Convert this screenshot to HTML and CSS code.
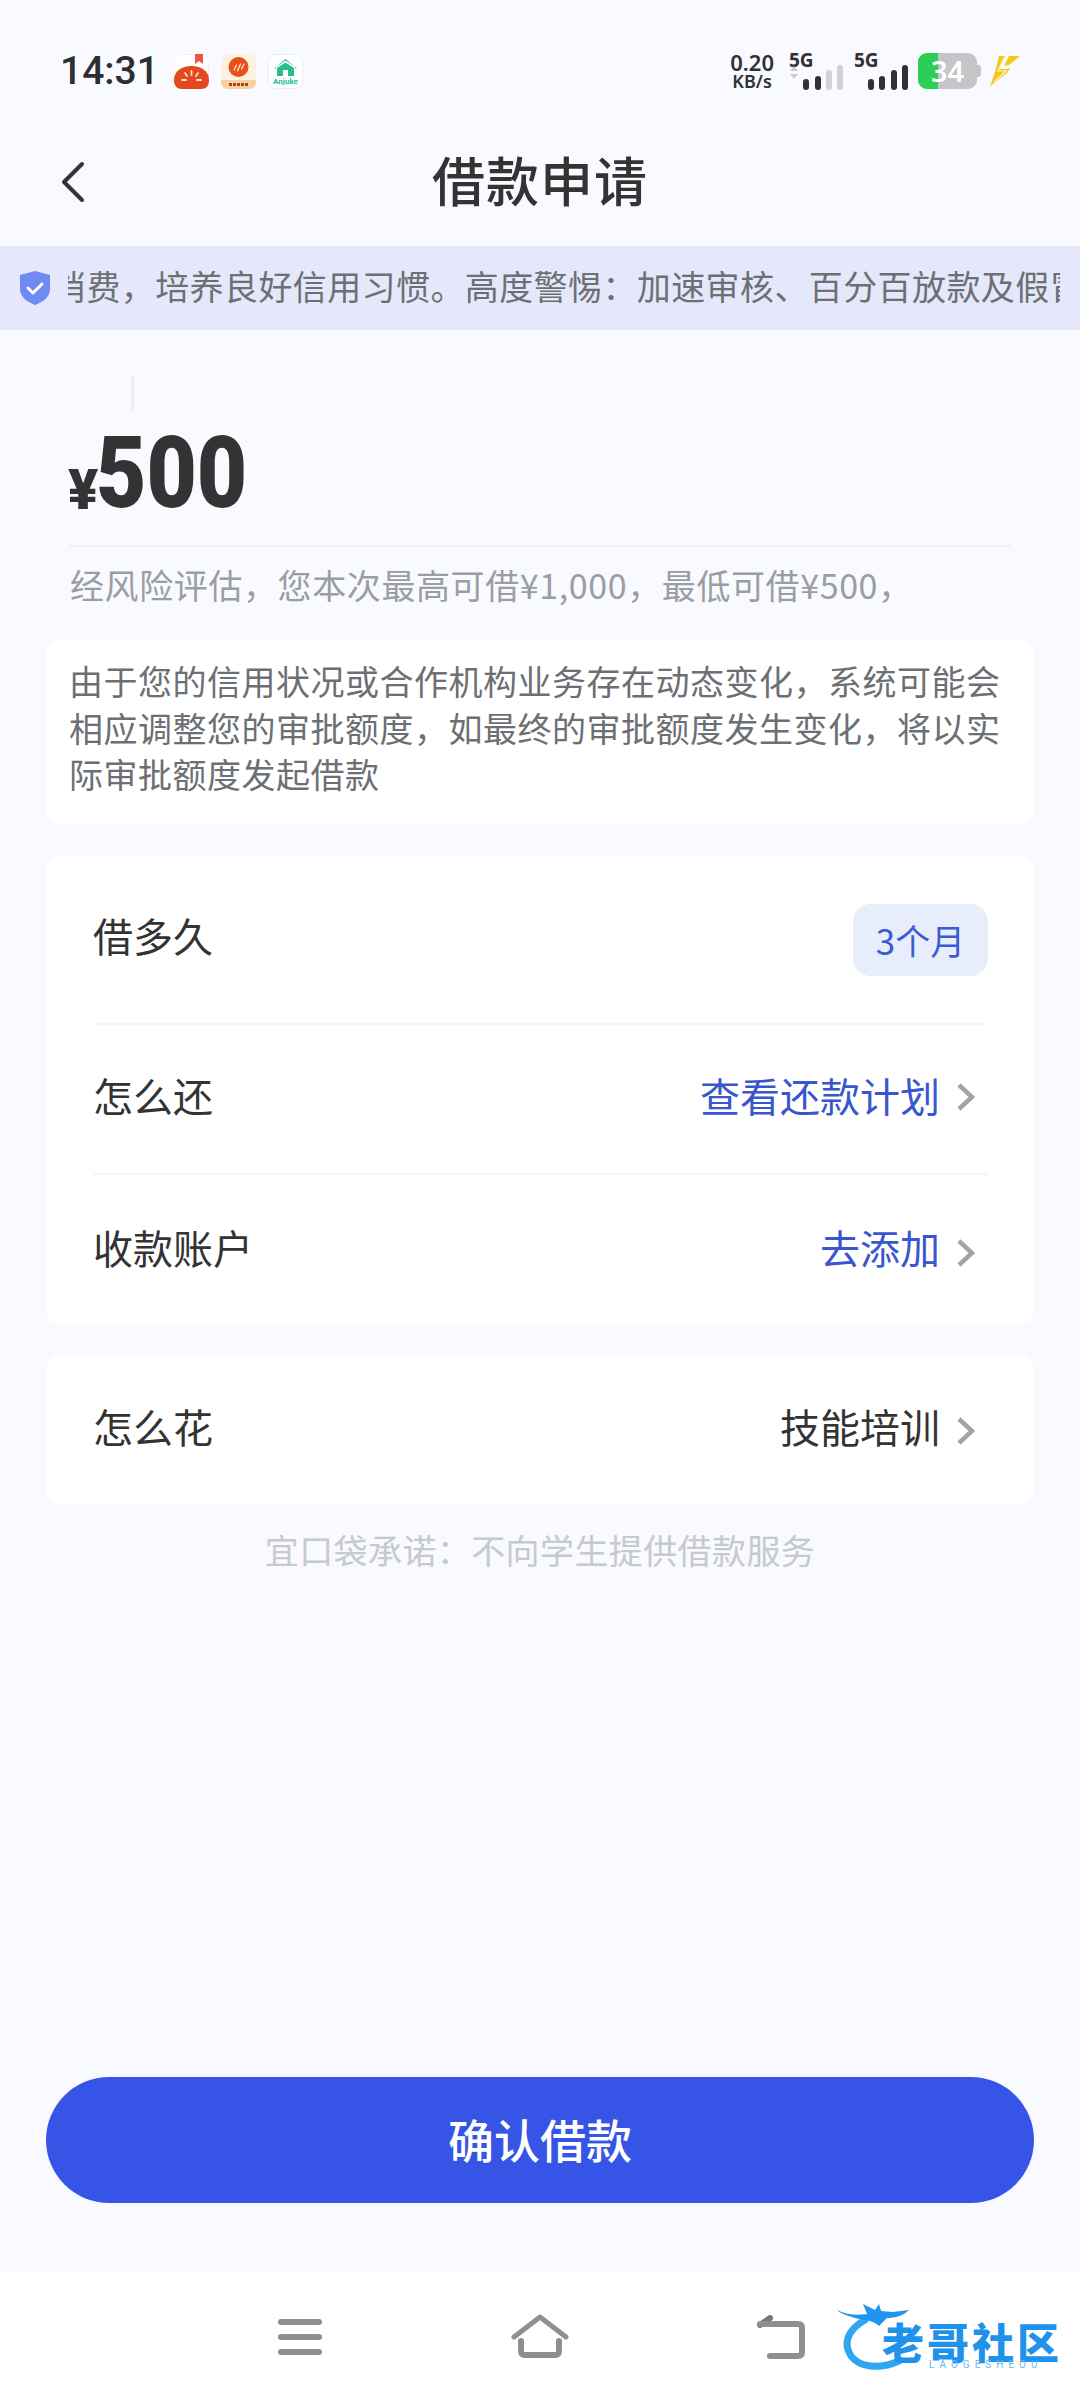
FILE: index.html
```html
<!DOCTYPE html>
<html lang="zh-CN">
<head>
    <meta charset="UTF-8">
    <meta name="viewport" content="width=device-width, initial-scale=1.0">
    <title>借款申请</title>
    <link rel="stylesheet" href="styles.css">
</head>
<body>
    <div class="page">
        <div class="status-bar">
            <span class="clock">14:31</span>
            <div class="app-icons">
                <svg class="app-icon" viewBox="0 0 35 35">
                    <rect x=".5" y=".5" width="34" height="34" rx="7" fill="#fff" stroke="#f0f1f4"/>
                    <path d="M21 0h8v10l-4-3-4 3z" fill="#e9553f"/>
                    <path d="M0 26C0 17 8 12 17.500 12S35 17 35 26c0 6-3 9-8 9H8c-5 0-8-3-8-9z" fill="#e4481c"/>
                    <path d="M17.500 17v4M11 19l2 3M24 19l-2 3M8 26h4M23 26h4" stroke="#ffe0c8" stroke-width="1.800" stroke-linecap="round"/>
                </svg>
                <svg class="app-icon" viewBox="0 0 35 35">
                    <rect width="35" height="35" rx="7" fill="#fdf1e2"/>
                    <path d="M0 26h35v2a7 7 0 0 1-7 7H7a7 7 0 0 1-7-7z" fill="#fbd0a0"/>
                    <circle cx="17.500" cy="13" r="10" fill="#e8501a"/>
                    <path d="M13 16l2.500-5M16.500 17l3-7M20.500 15l2.500-5" stroke="#ffe6cf" stroke-width="1.300" stroke-linecap="round"/>
                    <path d="M8 30.500h19" stroke="#a3451a" stroke-width="3" stroke-dasharray="3 1"/>
                </svg>
                <svg class="app-icon" viewBox="0 0 35 35">
                    <rect x=".5" y=".5" width="34" height="34" rx="7" fill="#fff" stroke="#eceef2"/>
                    <path d="M17.500 5L29 14.500h-2v-1.500L17.500 6.500 8 13v1.500H6z" fill="#28bd91"/>
                    <path d="M17.500 8.500L26 14v8H9v-8z" fill="#28bd91"/>
                    <rect x="15" y="16" width="5" height="6" fill="#fff"/>
                    <text x="17.500" y="30" text-anchor="middle" class="anjuke">Anjuke</text>
                </svg>
            </div>
            <div class="status-right">
                <div class="net-speed">
                    <span class="speed-num">0.20</span>
                    <span class="speed-unit">KB/s</span>
                </div>
                <div class="sim">
                    <span class="sim-label">5G</span>
                    <svg class="sim-bars" viewBox="0 0 54 25">
                        <path d="M5 1l4 5H1zM5 14l4-5H1z" fill="#c9cbcf"/>
                        <rect x="14" y="14" width="6" height="11" rx="3" fill="#2f3133"/>
                        <rect x="26" y="11" width="6" height="14" rx="3" fill="#2f3133"/>
                        <rect x="37" y="5" width="6" height="20" rx="3" fill="#d0d2d5"/>
                        <rect x="48" y="0" width="6" height="25" rx="3" fill="#d0d2d5"/>
                    </svg>
                </div>
                <div class="sim">
                    <span class="sim-label">5G</span>
                    <svg class="sim-bars" viewBox="0 0 54 25">
                        <rect x="14" y="14" width="6" height="11" rx="3" fill="#2f3133"/>
                        <rect x="25" y="11" width="6" height="14" rx="3" fill="#2f3133"/>
                        <rect x="37" y="5" width="6" height="20" rx="3" fill="#2f3133"/>
                        <rect x="48" y="0" width="6" height="25" rx="3" fill="#2f3133"/>
                    </svg>
                </div>
                <div class="battery">
                    <span class="battery-fill"></span>
                    <span class="battery-num">34</span>
                    <span class="battery-nub"></span>
                </div>
                <svg class="bolt" viewBox="0 0 30 30">
                    <path d="M9 0h21L19 9l-5 1 5-10-1 0z" fill="#f6c81e"/>
                    <path d="M9 0h6l-6 13h9l3-2-4 6L0 30 5 16z" fill="#f6c81e"/>
                    <path d="M14 2L8 15h8L4 26" fill="none" stroke="#fdf3c4" stroke-width="1.200"/>
                </svg>
            </div>
        </div>

        <div class="nav-bar">
            <svg class="back-icon" viewBox="0 0 24 42">
                <path d="M21 3L3 21l18 18" fill="none" stroke="#333" stroke-width="4" stroke-linecap="round" stroke-linejoin="round"/>
            </svg>
            <h1 class="nav-title">借款申请</h1>
        </div>

        <div class="notice">
            <svg class="shield" viewBox="0 0 30 34">
                <path d="M15 0l15 4v14c0 8-7 13-15 16C7 31 0 26 0 18V4z" fill="#6f8bf2"/>
                <path d="M8 17l5 5 9-9" fill="none" stroke="#fff" stroke-width="3" stroke-linecap="round" stroke-linejoin="round"/>
            </svg>
            <div class="notice-clip">
                <p class="notice-text">消费&#65292;培养良好信用习惯。高度警惕&#65306;加速审核、百分百放款及假冒</p>
            </div>
        </div>

        <div class="amount-box">
            <div class="cursor"></div>
            <div class="amount"><span class="yen">¥</span><span class="amount-num">500</span></div>
            <p class="limit">经风险评估&#65292;您本次最高可借¥1,000&#65292;最低可借¥500&#65292;</p>
        </div>

        <div class="card tip-card">
            由于您的信用状况或合作机构业务存在动态变化&#65292;系统可能会相应调整您的审批额度&#65292;如最终的审批额度发生变化&#65292;将以实际审批额度发起借款
        </div>

        <div class="card list-card">
            <div class="row row-term">
                <span>借多久</span>
                <span class="pill">3个月</span>
            </div>
            <div class="row row-plan">
                <span>怎么还</span>
                <span class="value link">查看还款计划</span>
                <svg class="arrow" viewBox="0 0 18 30"><path d="M2 3l13 12L2 27" fill="none" stroke="#a2a4a6" stroke-width="4.500"/></svg>
            </div>
            <div class="row row-account">
                <span>收款账户</span>
                <span class="value link">去添加</span>
                <svg class="arrow" viewBox="0 0 18 30"><path d="M2 3l13 12L2 27" fill="none" stroke="#a2a4a6" stroke-width="4.500"/></svg>
            </div>
        </div>

        <div class="card list-card spend-card">
            <div class="row row-spend">
                <span>怎么花</span>
                <span class="value">技能培训</span>
                <svg class="arrow" viewBox="0 0 18 30"><path d="M2 3l13 12L2 27" fill="none" stroke="#a2a4a6" stroke-width="4.500"/></svg>
            </div>
        </div>

        <p class="promise">宜口袋承诺&#65306;不向学生提供借款服务</p>

        <div class="spacer"></div>

        <button class="confirm-btn">确认借款</button>

        <div class="nav-keys">
            <svg class="key key-menu" viewBox="0 0 44 36">
                <path d="M3 3h38M3 18h38M3 33h38" stroke="#8f8f8f" stroke-width="6" stroke-linecap="round"/>
            </svg>
            <svg class="key key-home" viewBox="0 0 58 44">
                <path d="M3 23L29 3l26 20" fill="none" stroke="#8f8f8f" stroke-width="5" stroke-linecap="round" stroke-linejoin="round"/>
                <path d="M10 27v10q0 4 4 4h30q4 0 4-4V27" fill="none" stroke="#8f8f8f" stroke-width="6" stroke-linecap="round"/>
            </svg>
            <svg class="key key-back" viewBox="0 0 50 44">
                <path d="M4 10L14 3" stroke="#777" stroke-width="6" stroke-linecap="round"/>
                <path d="M4 9h38q4 0 4 4v24q0 4-4 4H14" fill="none" stroke="#8f8f8f" stroke-width="6" stroke-linecap="round"/>
            </svg>

            <div class="watermark">
                <svg class="dragon" viewBox="0 0 90 70">
                    <path d="M28 18C10 28 6 42 14 54c8 11 28 14 48 5" fill="none" stroke="#2ea6f2" stroke-width="7" stroke-linecap="round"/>
                    <path d="M0 8c8 4 18 6 30 4L26 2l12 6 4-6 2 7 12 1 16-2c-6 6-14 8-22 8l-8 8c-6-6-16-6-24-8-6-2-14-4-18-8z" fill="#1f95ee"/>
                </svg>
                <span class="wm-name">老哥社区</span>
                <span class="wm-sub">LAOGESHEOU</span>
            </div>
        </div>
    </div>
</body>
</html>
```

FILE: styles.css
```css
* {
    box-sizing: border-box;
}
body {
    margin: 0;
    font-family: "Noto Sans CJK SC", "Noto Sans", sans-serif;
    background-color: #f8faff;
    color: #333;
}
p, h1 {
    margin: 0;
}
.page {
    width: 1080px;
    height: 2400px;
    display: flex;
    flex-direction: column;
    overflow: hidden;
}

/* status bar */
.status-bar {
    height: 118px;
    padding: 24px 60px 0 60px;
    display: flex;
    align-items: center;
}
.clock {
    font-family: Roboto, sans-serif;
    font-size: 39px;
    font-weight: 500;
    color: #2c2e30;
    width: 114px;
}
.app-icons {
    display: flex;
    gap: 12px;
}
.app-icon {
    width: 35px;
    height: 35px;
}
.anjuke {
    font-family: Roboto, sans-serif;
    font-size: 8px;
    font-weight: 700;
    fill: #28bd91;
}
.status-right {
    margin-left: auto;
    display: flex;
    align-items: center;
}
.net-speed {
    display: flex;
    flex-direction: column;
    align-items: center;
    font-family: "Noto Sans", sans-serif;
    font-weight: 600;
    color: #2f3133;
    line-height: 1;
}
.speed-num {
    font-size: 22px;
    line-height: 21px;
}
.speed-unit {
    font-size: 18px;
    line-height: 17px;
}
.sim {
    width: 54px;
    height: 37px;
    margin-left: 15px;
    display: flex;
    flex-direction: column;
    justify-content: space-between;
}
.sim + .sim {
    margin-left: 11px;
}
.sim-label {
    font-family: "Noto Sans", sans-serif;
    font-size: 19px;
    font-weight: 700;
    line-height: 14px;
    color: #2f3133;
}
.sim-bars {
    width: 54px;
    height: 25px;
    margin-top: -2px;
}
.battery {
    position: relative;
    width: 59px;
    height: 36px;
    margin-left: 10px;
    background: #c3c5c8;
    border-radius: 9px;
}
.battery-fill {
    position: absolute;
    left: 0;
    top: 0;
    bottom: 0;
    width: 20px;
    background: #2ccf55;
    border-radius: 9px 0 0 9px;
}
.battery-num {
    position: absolute;
    left: 13px;
    top: 0;
    font-family: "Noto Sans", sans-serif;
    font-size: 29px;
    font-weight: 600;
    line-height: 36px;
    color: #fff;
}
.battery-nub {
    position: absolute;
    right: -4px;
    top: 12px;
    width: 4px;
    height: 12px;
    background: #c3c5c8;
    border-radius: 0 3px 3px 0;
}
.bolt {
    width: 30px;
    height: 30px;
    margin-left: 13px;
}

/* title */
.nav-bar {
    position: relative;
    height: 128px;
    padding-bottom: 6px;
    display: flex;
    align-items: center;
    justify-content: center;
}
.back-icon {
    position: absolute;
    left: 61px;
    top: 43px;
    width: 24px;
    height: 42px;
}
.nav-title {
    font-size: 53px;
    font-weight: 500;
    color: #333;
    letter-spacing: 1px;
}

/* scrolling notice */
.notice {
    height: 84px;
    padding: 0 20px 0 20px;
    background: #e4e8fa;
    display: flex;
    align-items: center;
}
.shield {
    width: 30px;
    height: 34px;
    flex: none;
}
.notice-clip {
    margin-left: 18px;
    padding-bottom: 5px;
    flex: 1;
    overflow: hidden;
}
.notice-text {
    margin-left: -16px;
    font-size: 34px;
    line-height: 48px;
    letter-spacing: 0.4px;
    color: #6c7074;
    white-space: nowrap;
}

/* amount */
.amount-box {
    margin: 0 69px;
    padding-top: 45px;
}
.cursor {
    width: 3px;
    height: 35px;
    margin-left: 62px;
    background: #eceef1;
}
.amount {
    height: 137px;
    display: flex;
    align-items: flex-end;
    font-family: Roboto, sans-serif;
    font-weight: 900;
    color: #333;
    border-bottom: 2px solid #eef0f3;
}
.yen {
    font-size: 56px;
    line-height: 70px;
    margin-bottom: 20px;
    margin-left: -1px;
    width: 28px;
}
.amount-num {
    font-size: 100px;
    line-height: 118px;
    margin-bottom: 13px;
    transform: scaleX(0.87);
    transform-origin: left center;
}
.limit {
    padding: 14px 0 0 1px;
    font-size: 34px;
    line-height: 48px;
    letter-spacing: 0.6px;
    color: #9a9ea2;
}

.card {
    margin: 0 46px;
    background: #fff;
    border-radius: 14px;
}
.tip-card {
    margin-top: 30px;
    height: 184px;
    padding: 19px 24px 0 23px;
    font-size: 34px;
    line-height: 46.500px;
    letter-spacing: 0.5px;
    color: #6c6f73;
}

/* option rows */
.list-card {
    margin-top: 34px;
    padding: 0 46px 0 47px;
}
.spend-card {
    margin-top: 31px;
}
.row {
    display: flex;
    align-items: center;
    font-size: 40px;
    color: #333;
    border-top: 2px solid #f4f5f7;
}
.row-term {
    height: 166px;
    padding-bottom: 10px;
    border-top: 0;
}
.row-plan {
    height: 150px;
    padding-bottom: 8px;
}
.row-account {
    height: 151px;
    padding-bottom: 5px;
}
.row-spend {
    height: 149px;
    padding-bottom: 7px;
    border-top: 0;
}
.value {
    margin-left: auto;
}
.link {
    color: #3a56cf;
}
.arrow {
    width: 18px;
    height: 30px;
    margin: 4px 13px 0 17px;
}
.row-account .arrow {
    margin-top: 12px;
}
.row-spend .arrow {
    margin-top: 10px;
}
.pill {
    margin-left: auto;
    margin-top: 9px;
    width: 135px;
    height: 72px;
    background: #e8edfb;
    border-radius: 18px;
    color: #3a5bd4;
    font-size: 35px;
    display: flex;
    align-items: center;
    justify-content: center;
}

.promise {
    margin-top: 22px;
    text-align: center;
    font-size: 34px;
    line-height: 48px;
    letter-spacing: 0.4px;
    color: #c6c9cd;
}
.spacer {
    flex: 1;
}
.confirm-btn {
    margin: 0 46px 70px;
    height: 126px;
    padding: 0 0 4px;
    flex: none;
    background: #3654e6;
    color: #fff;
    border: none;
    border-radius: 63px;
    font-family: inherit;
    font-size: 46px;
    font-weight: 500;
}

/* system keys */
.nav-keys {
    position: relative;
    height: 127px;
    flex: none;
    background: #fff;
}
.key {
    position: absolute;
}
.key-menu {
    left: 278px;
    top: 46px;
    width: 44px;
    height: 36px;
}
.key-home {
    left: 511px;
    top: 41px;
    width: 58px;
    height: 44px;
}
.key-back {
    left: 756px;
    top: 42px;
    width: 50px;
    height: 44px;
}

/* site mark over the key bar */
.watermark {
    position: absolute;
    left: 837px;
    top: 29px;
    width: 240px;
    height: 70px;
}
.dragon {
    position: absolute;
    left: 0;
    top: 0;
    width: 90px;
    height: 70px;
}
.wm-name {
    position: absolute;
    left: 45px;
    top: 21px;
    font-weight: 900;
    font-size: 42px;
    line-height: 36px;
    letter-spacing: 3px;
    white-space: nowrap;
    color: #1f93ec;
}
.wm-sub {
    position: absolute;
    left: 92px;
    top: 57px;
    font-family: Roboto, sans-serif;
    font-size: 10px;
    line-height: 12px;
    letter-spacing: 5px;
    color: #6ab8f0;
    white-space: nowrap;
}
```
